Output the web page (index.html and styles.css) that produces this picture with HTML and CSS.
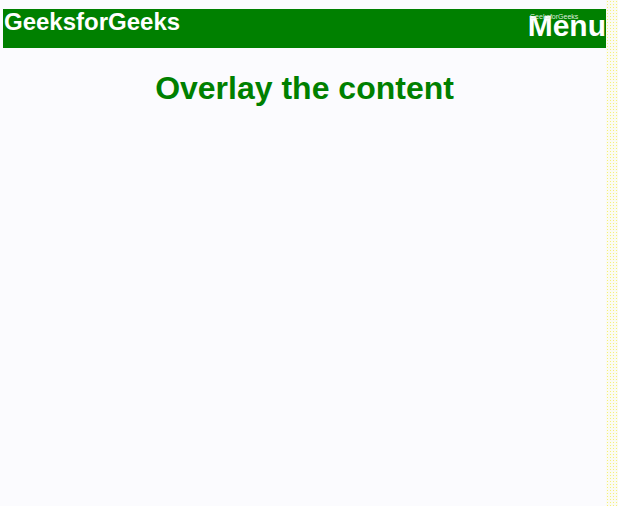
FILE: index.html
```html
<!DOCTYPE html>
<html>
<head>
<meta charset="utf-8">
<link rel="stylesheet" href="styles.css">
</head>
<body>
<div class="page">
  <div class="main">
    <header class="bar">
      <span class="brand">GeeksforGeeks</span>
      <span class="menu">Menu<span class="tiny">GeeksforGeeks</span></span>
    </header>
    <h1 class="title">Overlay the content</h1>
  </div>
  <div class="edge"></div>
</div>
</body>
</html>
```
FILE: styles.css
```css
html, body {
  margin: 0;
  padding: 0;
  height: 100%;
  background: #fbfbfe;
}
body {
  font-family: "Liberation Sans", Arial, sans-serif;
}
.page {
  display: flex;
  height: 506px;
}
.main {
  flex: 1;
  padding: 9px 0 0 3px;
}
.edge {
  width: 12px;
  background-image: radial-gradient(#f6f07a 0.8px, transparent 1px);
  background-size: 3px 3px;
  background-color: #fbfbf2;
}
.bar {
  height: 39px;
  background: #008000;
  display: flex;
  justify-content: space-between;
  align-items: flex-start;
}
.brand {
  color: #ffffff;
  font-weight: bold;
  font-size: 24px;
  line-height: 26px;
  padding-left: 1px;
}
.menu {
  position: relative;
  color: #ffffff;
  font-weight: bold;
  font-size: 30px;
  line-height: 30px;
  padding-top: 2px;
}
.tiny {
  position: absolute;
  left: 2px;
  top: 4px;
  font-size: 7px;
  line-height: 8px;
  font-weight: normal;
  color: #dfeedf;
  white-space: nowrap;
}
.title {
  margin: 22px 0 0 0;
  text-align: center;
  color: #008000;
  font-weight: bold;
  font-size: 32px;
  line-height: 36px;
}
```
